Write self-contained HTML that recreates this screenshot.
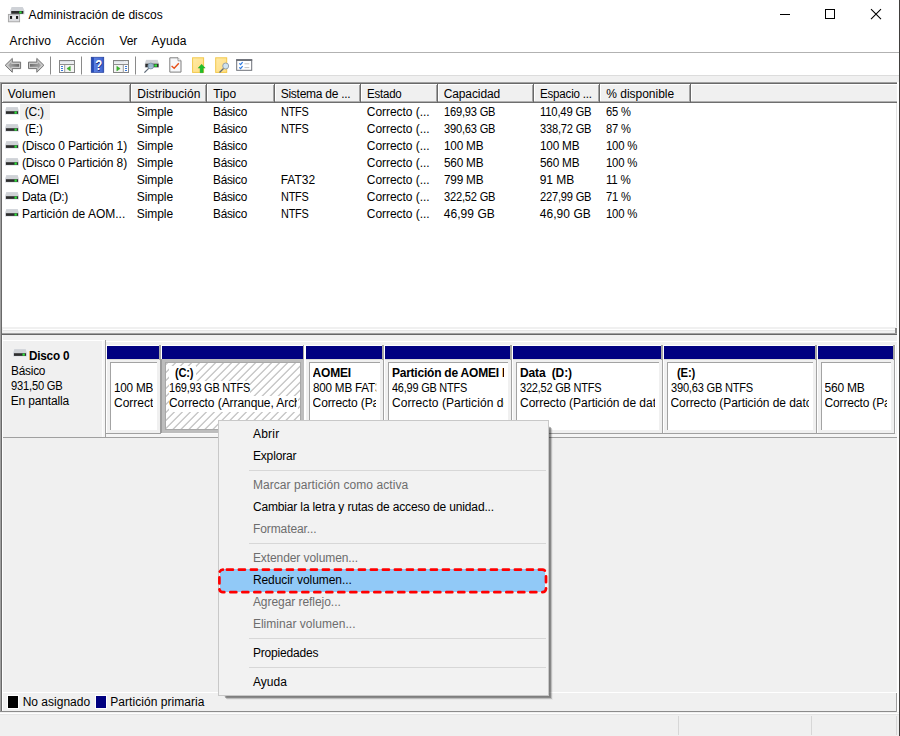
<!DOCTYPE html>
<html lang="es">
<head>
<meta charset="utf-8">
<title>Administración de discos</title>
<style>
*{box-sizing:border-box;margin:0;padding:0}
html,body{width:900px;height:736px;overflow:hidden;background:#fff}
body{position:relative;font-family:"Liberation Sans",sans-serif;font-size:12px;color:#000;line-height:16px}
.a{position:absolute}
.t{position:absolute;white-space:pre;line-height:16px;height:16px;transform-origin:0 0}
.b{font-weight:bold}
.g{color:#6d6d6d}
/* DISK PANE */
.bar{position:absolute;top:346px;height:13px;background:#000080}
/* MENU */
#cmsh{left:223px;top:425px;width:326px;height:271px;box-shadow:1px 1px 0 rgba(0,0,0,.07),2px 2px 0 rgba(0,0,0,.278),3px 3px 0 rgba(0,0,0,.177),4px 4px 0 rgba(0,0,0,.04)}
#cm{left:218px;top:420px;width:331px;height:276px;background:#f2f2f2;border:1px solid #c8c8c8}
.sep{position:absolute;left:249px;width:297px;height:1px;background:#d7d7d7}
</style>
</head>
<body>
<!-- TITLEBAR -->
<svg class="a" style="left:7px;top:6px" width="19" height="17" viewBox="0 0 19 17">
<path d="M4.600 1h11.200l1.900 4v3.500h-14.600v-3.500z" fill="#e1e4e9"/>
<path d="M4.800 1.100h10.800l1.800 3.900h-14.200z" fill="#cfd2d7"/>
<rect x="4.200" y="5" width="12.200" height="2.800" fill="#2b2b2b"/>
<rect x="12.300" y="5.400" width="2.300" height="2" fill="#2ee63c"/>
<rect x="1.400" y="8.400" width="11.200" height="7.400" fill="#dcdde0" stroke="#a3a3a3" stroke-width=".9"/>
<rect x="3" y="10" width="2.100" height="2.900" fill="#1c1c1c"/>
<rect x="9" y="10" width="2.100" height="2.900" fill="#1c1c1c"/>
<rect x="5.500" y="10.500" width="3" height="2" fill="#f4f4f4"/>
</svg>
<svg class="a" style="left:770px;top:0" width="129" height="30" viewBox="0 0 129 30">
<path d="M10 14.5h10" stroke="#000" stroke-width="1" fill="none"/>
<rect x="55.5" y="9.5" width="9" height="9" stroke="#000" stroke-width="1" fill="none"/>
<path d="M101 9.2l10 10M111 9.2l-10 10" stroke="#000" stroke-width="1.1" fill="none"/>
</svg>
<div class="t" style="left:28.6px;top:7px;letter-spacing:0.06px">Administración de discos</div>
<!-- MENUBAR -->
<div class="a" style="left:0;top:52px;width:899px;height:1px;background:#b2b2b2"></div>
<div class="t" style="left:9.6px;top:33px;letter-spacing:0.24px">Archivo</div>
<div class="t" style="left:66.5px;top:33px;letter-spacing:0.36px">Acción</div>
<div class="t" style="left:119.5px;top:33px;letter-spacing:-0.11px">Ver</div>
<div class="t" style="left:151.6px;top:33px;letter-spacing:0.28px">Ayuda</div>
<!-- TOOLBAR -->
<div class="a" style="left:0;top:75px;width:899px;height:8px;background:#f0f0f0;border-top:1px solid #dcdcdc"></div>
<svg class="a" style="left:0;top:53px" width="260" height="22" viewBox="0 0 260 22">
<defs>
<linearGradient id="ga" x1="0" y1="0" x2="0" y2="1"><stop offset="0" stop-color="#c6c6c6"/><stop offset=".45" stop-color="#7d7d7d"/><stop offset=".7" stop-color="#8a8a8a"/><stop offset="1" stop-color="#b8b8b8"/></linearGradient>
<linearGradient id="gh" x1="0" y1="0" x2="1" y2="0"><stop offset="0" stop-color="#2247b0"/><stop offset=".2" stop-color="#2a50bd"/><stop offset=".22" stop-color="#5b7fe0"/><stop offset=".8" stop-color="#4a6ed6"/><stop offset="1" stop-color="#2f54c2"/></linearGradient>
<linearGradient id="gb" x1="0" y1="0" x2="1" y2="0"><stop offset="0" stop-color="#b0b0b0"/><stop offset="1" stop-color="#676767"/></linearGradient>
<linearGradient id="gf" x1="0" y1="0" x2="1" y2="0"><stop offset="0" stop-color="#707070"/><stop offset="1" stop-color="#a8a8a8"/></linearGradient>
<linearGradient id="gy" x1="0" y1="0" x2="1" y2="1"><stop offset="0" stop-color="#ffeaa6"/><stop offset="1" stop-color="#ffdd80"/></linearGradient>
</defs>
<!-- back -->
<path d="M5.200 12.300l7.100-6.900v3.700h8.300v6.500h-8.300v3.700z" fill="#c9c9c9" stroke="#737373" stroke-width="1" stroke-linejoin="round"/>
<path d="M8 12.300l3.300-3.200v1.900h7.800v2.700h-7.800v1.900z" fill="url(#gb)"/>
<!-- forward -->
<path d="M43.900 12.300l-7.100-6.900v3.700h-8.300v6.500h8.300v3.700z" fill="#c9c9c9" stroke="#737373" stroke-width="1" stroke-linejoin="round"/>
<path d="M41.100 12.300l-3.300-3.200v1.900h-7.800v2.700h7.800v1.900z" fill="url(#gf)"/>
<path d="M50.500 3.500v18" stroke="#8a8a8a" stroke-width="1"/>
<!-- console tree -->
<g>
<rect x="59.500" y="7.500" width="15" height="12" fill="#f4f4f4" stroke="#858585"/>
<rect x="60" y="8" width="14" height="1.500" fill="#d9dde3"/>
<rect x="60" y="9.500" width="14" height="1.500" fill="#eceef1"/>
<rect x="70.300" y="8.300" width="1" height="1" fill="#fff"/><rect x="72.200" y="8.300" width="1" height="1" fill="#fff"/>
<path d="M59.500 11.500h15" stroke="#8e8e8e"/>
<rect x="60" y="12" width="4.500" height="7" fill="#fdfdfd"/>
<path d="M64.700 12v7.500" stroke="#9a9a9a"/>
<path d="M61 13.500h2M61 15.500h2M61 17.500h2" stroke="#3a78d8" stroke-width="1"/>
<path d="M70.300 13.200v4.800l-3.400-2.400z" fill="#3cb62e" stroke="#2a9a1e" stroke-width=".4"/>
</g>
<path d="M81.500 3.500v18" stroke="#8a8a8a" stroke-width="1"/>
<!-- help -->
<rect x="91.200" y="4.200" width="12.600" height="15.300" fill="url(#gh)" stroke="#1d3794" stroke-width=".6"/>
<text transform="translate(98.700 17.300) scale(.78 1)" font-family="Liberation Sans,sans-serif" font-size="14.500" font-weight="bold" fill="#1b2f80" text-anchor="middle" x=".8" y=".7">?</text>
<text transform="translate(98.700 17.300) scale(.78 1)" font-family="Liberation Sans,sans-serif" font-size="14.500" font-weight="bold" fill="#fff" text-anchor="middle">?</text>
<!-- action pane -->
<g>
<rect x="113.500" y="7.500" width="15" height="12" fill="#f4f4f4" stroke="#858585"/>
<rect x="114" y="8" width="14" height="1.500" fill="#d9dde3"/>
<rect x="114" y="9.500" width="14" height="1.500" fill="#eceef1"/>
<rect x="124.300" y="8.300" width="1" height="1" fill="#fff"/><rect x="126.200" y="8.300" width="1" height="1" fill="#fff"/>
<path d="M113.500 11.500h15" stroke="#8e8e8e"/>
<rect x="123.500" y="12" width="4.500" height="7" fill="#fdfdfd"/>
<path d="M123.300 12v7.500" stroke="#9a9a9a"/>
<path d="M125 13.500h2M125 15.500h2M125 17.500h2" stroke="#3a78d8" stroke-width="1"/>
<path d="M116.800 13.200v4.800l3.400-2.400z" fill="#3cb62e" stroke="#2a9a1e" stroke-width=".4"/>
</g>
<path d="M135.500 3.500v18" stroke="#8a8a8a" stroke-width="1"/>
<!-- drive w/ magnifier -->
<g>
<path d="M146 6.800h11.600l1.400 4v4.300h-14.300v-4.300z" fill="#dfe2e8"/>
<path d="M146.200 7h11.300l1 3.700h-13.300z" fill="#cdd0d5"/>
<rect x="145.300" y="10.700" width="13.300" height="3.500" fill="#2e2e2e"/>
<rect x="154.300" y="11.400" width="2.700" height="2.300" fill="#2ee63c"/>
<circle cx="150.800" cy="13" r="2.900" fill="#a9c8e0" fill-opacity=".9" stroke="#7890a4" stroke-width=".9"/>
<path d="M148.700 15.400l-4.300 4.200" stroke="#5f6b78" stroke-width="1.300"/>
</g>
<!-- doc w/ check -->
<g>
<path d="M169.800 4.800h8.200l3 3v11.300h-11.200z" fill="#f7f8fa" stroke="#7f7f7f"/>
<path d="M178 4.800v3h3" fill="#fff" stroke="#7f7f7f" stroke-width=".8"/>
<path d="M171.600 12.900l2.600 2.300 4.600-5" fill="none" stroke="#e8501a" stroke-width="1.400"/>
</g>
<!-- folder up -->
<g>
<rect x="192.600" y="4.800" width="11" height="14.600" fill="url(#gy)" stroke="#f2c84b" stroke-width="1"/>
<path d="M201.600 11.200l3.600 3.900h-2v4.600h-3.100v-4.600h-2z" fill="#1fbf2a" stroke="#17a422" stroke-width=".4"/>
</g>
<!-- folder search -->
<g>
<rect x="215.700" y="4.800" width="11" height="14.600" fill="url(#gy)" stroke="#f2c84b" stroke-width="1"/>
<circle cx="225.700" cy="13" r="3" fill="#cfe3f1" stroke="#8d9aa6" stroke-width=".9"/>
<path d="M223.500 15.500l-4 4" stroke="#5f6b78" stroke-width="1.300"/>
</g>
<!-- checklist -->
<g>
<rect x="236.700" y="6.700" width="15" height="10.600" fill="#fff" stroke="#6d7178" stroke-width="1"/>
<rect x="236.200" y="6.200" width="16" height="1.800" fill="#6d7178"/>
<path d="M239.300 10.300l1.300 1.300 2-2.500M239.300 14.300l1.300 1.300 2-2.500" fill="none" stroke="#2f7be0" stroke-width="1.200"/>
<path d="M244.500 10.800h4.800M244.500 14.600h4.800" stroke="#c2c2c2"/>
</g>
</svg>
<!-- LIST -->
<div class="a" style="left:0;top:82px;width:898px;height:1px;background:#a0a0a0"></div>
<div class="a" style="left:1px;top:83px;width:897px;height:1px;background:#696969"></div>
<div class="a" style="left:2px;top:84px;width:895px;height:18px;background:#f0f0f0;border-top:1px solid #fff;border-left:1px solid #fff"></div>
<div class="a" style="left:3px;top:101px;width:894px;height:1px;background:#b0b0b0"></div>
<div class="a" style="left:2px;top:102px;width:895px;height:1px;background:#6e6e6e"></div>
<div class="a" style="left:129px;top:85px;width:1px;height:17px;background:#a3a3a3"></div>
<div class="a" style="left:130px;top:84px;width:1px;height:19px;background:#696969"></div>
<div class="a" style="left:131px;top:84px;width:1px;height:17px;background:#fff"></div>
<div class="a" style="left:205px;top:85px;width:1px;height:17px;background:#a3a3a3"></div>
<div class="a" style="left:206px;top:84px;width:1px;height:19px;background:#696969"></div>
<div class="a" style="left:207px;top:84px;width:1px;height:17px;background:#fff"></div>
<div class="a" style="left:273px;top:85px;width:1px;height:17px;background:#a3a3a3"></div>
<div class="a" style="left:274px;top:84px;width:1px;height:19px;background:#696969"></div>
<div class="a" style="left:275px;top:84px;width:1px;height:17px;background:#fff"></div>
<div class="a" style="left:359px;top:85px;width:1px;height:17px;background:#a3a3a3"></div>
<div class="a" style="left:360px;top:84px;width:1px;height:19px;background:#696969"></div>
<div class="a" style="left:361px;top:84px;width:1px;height:17px;background:#fff"></div>
<div class="a" style="left:436px;top:85px;width:1px;height:17px;background:#a3a3a3"></div>
<div class="a" style="left:437px;top:84px;width:1px;height:19px;background:#696969"></div>
<div class="a" style="left:438px;top:84px;width:1px;height:17px;background:#fff"></div>
<div class="a" style="left:532px;top:85px;width:1px;height:17px;background:#a3a3a3"></div>
<div class="a" style="left:533px;top:84px;width:1px;height:19px;background:#696969"></div>
<div class="a" style="left:534px;top:84px;width:1px;height:17px;background:#fff"></div>
<div class="a" style="left:598px;top:85px;width:1px;height:17px;background:#a3a3a3"></div>
<div class="a" style="left:599px;top:84px;width:1px;height:19px;background:#696969"></div>
<div class="a" style="left:600px;top:84px;width:1px;height:17px;background:#fff"></div>
<div class="a" style="left:689px;top:85px;width:1px;height:17px;background:#a3a3a3"></div>
<div class="a" style="left:690px;top:84px;width:1px;height:19px;background:#696969"></div>
<div class="a" style="left:691px;top:84px;width:1px;height:17px;background:#fff"></div>
<div class="a" style="left:896px;top:103px;width:1px;height:224px;background:#e3e3e3"></div>
<div class="a" style="left:20px;top:103.500px;width:30px;height:16px;background:#f0f0f0"></div>
<svg class="a" style="left:5px;top:107px" width="14" height="8" viewBox="0 0 14 8"><path d="M1.200 0h11.600l1.200 4.200v3.600h-14v-3.600z" fill="#e0e3e9"/><path d="M1.400 .2h11.200l1 4h-13.200z" fill="#cfd2d6"/><rect x=".9" y="4.200" width="12.200" height="2.700" fill="#2d2d2d"/><rect x="9.500" y="4.500" width="2.300" height="2.200" fill="#2ee63c"/></svg>
<svg class="a" style="left:5px;top:124px" width="14" height="8" viewBox="0 0 14 8"><path d="M1.200 0h11.600l1.200 4.200v3.600h-14v-3.600z" fill="#e0e3e9"/><path d="M1.400 .2h11.200l1 4h-13.200z" fill="#cfd2d6"/><rect x=".9" y="4.200" width="12.200" height="2.700" fill="#2d2d2d"/><rect x="9.500" y="4.500" width="2.300" height="2.200" fill="#2ee63c"/></svg>
<svg class="a" style="left:5px;top:141px" width="14" height="8" viewBox="0 0 14 8"><path d="M1.200 0h11.600l1.200 4.200v3.600h-14v-3.600z" fill="#e0e3e9"/><path d="M1.400 .2h11.200l1 4h-13.200z" fill="#cfd2d6"/><rect x=".9" y="4.200" width="12.200" height="2.700" fill="#2d2d2d"/><rect x="9.500" y="4.500" width="2.300" height="2.200" fill="#2ee63c"/></svg>
<svg class="a" style="left:5px;top:158px" width="14" height="8" viewBox="0 0 14 8"><path d="M1.200 0h11.600l1.200 4.200v3.600h-14v-3.600z" fill="#e0e3e9"/><path d="M1.400 .2h11.200l1 4h-13.200z" fill="#cfd2d6"/><rect x=".9" y="4.200" width="12.200" height="2.700" fill="#2d2d2d"/><rect x="9.500" y="4.500" width="2.300" height="2.200" fill="#2ee63c"/></svg>
<svg class="a" style="left:5px;top:175px" width="14" height="8" viewBox="0 0 14 8"><path d="M1.200 0h11.600l1.200 4.200v3.600h-14v-3.600z" fill="#e0e3e9"/><path d="M1.400 .2h11.200l1 4h-13.200z" fill="#cfd2d6"/><rect x=".9" y="4.200" width="12.200" height="2.700" fill="#2d2d2d"/><rect x="9.500" y="4.500" width="2.300" height="2.200" fill="#2ee63c"/></svg>
<svg class="a" style="left:5px;top:192px" width="14" height="8" viewBox="0 0 14 8"><path d="M1.200 0h11.600l1.200 4.200v3.600h-14v-3.600z" fill="#e0e3e9"/><path d="M1.400 .2h11.200l1 4h-13.200z" fill="#cfd2d6"/><rect x=".9" y="4.200" width="12.200" height="2.700" fill="#2d2d2d"/><rect x="9.500" y="4.500" width="2.300" height="2.200" fill="#2ee63c"/></svg>
<svg class="a" style="left:5px;top:209px" width="14" height="8" viewBox="0 0 14 8"><path d="M1.200 0h11.600l1.200 4.200v3.600h-14v-3.600z" fill="#e0e3e9"/><path d="M1.400 .2h11.200l1 4h-13.200z" fill="#cfd2d6"/><rect x=".9" y="4.200" width="12.200" height="2.700" fill="#2d2d2d"/><rect x="9.500" y="4.500" width="2.300" height="2.200" fill="#2ee63c"/></svg>
<div class="t" style="left:7.7px;top:86px;letter-spacing:0.16px">Volumen</div>
<div class="t" style="left:137.3px;top:86px;letter-spacing:0.04px">Distribución</div>
<div class="t" style="left:213.2px;top:86px">Tipo</div>
<div class="t" style="left:280.7px;top:86px;letter-spacing:-0.26px">Sistema de ...</div>
<div class="t" style="left:366.8px;top:86px;letter-spacing:-0.22px;transform:scaleX(0.957)">Estado</div>
<div class="t" style="left:443.7px;top:86px;letter-spacing:-0.11px">Capacidad</div>
<div class="t" style="left:539.7px;top:86px;letter-spacing:-0.22px;transform:scaleX(0.966)">Espacio ...</div>
<div class="t" style="left:606.3px;top:86px;letter-spacing:-0.02px">% disponible</div>
<div class="t" style="left:24.8px;top:104px;letter-spacing:-0.23px">(C:)</div>
<div class="t" style="left:136.8px;top:104px;letter-spacing:-0.08px">Simple</div>
<div class="t" style="left:212.9px;top:104px;letter-spacing:-0.22px;transform:scaleX(0.980)">Básico</div>
<div class="t" style="left:280.7px;top:104px;letter-spacing:-0.22px;transform:scaleX(0.906)">NTFS</div>
<div class="t" style="left:366.8px;top:104px;letter-spacing:-0.04px">Correcto (...</div>
<div class="t" style="left:443.7px;top:104px;letter-spacing:-0.22px;transform:scaleX(0.926)">169,93 GB</div>
<div class="t" style="left:539.7px;top:104px;letter-spacing:-0.22px;transform:scaleX(0.941)">110,49 GB</div>
<div class="t" style="left:606.3px;top:104px;letter-spacing:-0.22px;transform:scaleX(0.929)">65 %</div>
<div class="t" style="left:24.8px;top:121px;letter-spacing:-0.22px;transform:scaleX(0.948)">(E:)</div>
<div class="t" style="left:136.8px;top:121px;letter-spacing:-0.08px">Simple</div>
<div class="t" style="left:212.9px;top:121px;letter-spacing:-0.22px;transform:scaleX(0.980)">Básico</div>
<div class="t" style="left:280.7px;top:121px;letter-spacing:-0.22px;transform:scaleX(0.906)">NTFS</div>
<div class="t" style="left:366.8px;top:121px;letter-spacing:-0.04px">Correcto (...</div>
<div class="t" style="left:443.7px;top:121px;letter-spacing:-0.22px;transform:scaleX(0.926)">390,63 GB</div>
<div class="t" style="left:539.7px;top:121px;letter-spacing:-0.22px;transform:scaleX(0.926)">338,72 GB</div>
<div class="t" style="left:606.3px;top:121px;letter-spacing:-0.22px;transform:scaleX(0.929)">87 %</div>
<div class="t" style="left:21.9px;top:138px;letter-spacing:-0.14px">(Disco 0 Partición 1)</div>
<div class="t" style="left:136.8px;top:138px;letter-spacing:-0.08px">Simple</div>
<div class="t" style="left:212.9px;top:138px;letter-spacing:-0.22px;transform:scaleX(0.980)">Básico</div>
<div class="t" style="left:366.8px;top:138px;letter-spacing:-0.04px">Correcto (...</div>
<div class="t" style="left:443.7px;top:138px;letter-spacing:-0.22px;transform:scaleX(0.982)">100 MB</div>
<div class="t" style="left:539.7px;top:138px;letter-spacing:-0.22px;transform:scaleX(0.982)">100 MB</div>
<div class="t" style="left:606.3px;top:138px;letter-spacing:-0.22px;transform:scaleX(0.947)">100 %</div>
<div class="t" style="left:21.9px;top:155px;letter-spacing:-0.14px">(Disco 0 Partición 8)</div>
<div class="t" style="left:136.8px;top:155px;letter-spacing:-0.08px">Simple</div>
<div class="t" style="left:212.9px;top:155px;letter-spacing:-0.22px;transform:scaleX(0.980)">Básico</div>
<div class="t" style="left:366.8px;top:155px;letter-spacing:-0.04px">Correcto (...</div>
<div class="t" style="left:443.7px;top:155px;letter-spacing:-0.22px;transform:scaleX(0.982)">560 MB</div>
<div class="t" style="left:539.7px;top:155px;letter-spacing:-0.22px;transform:scaleX(0.982)">560 MB</div>
<div class="t" style="left:606.3px;top:155px;letter-spacing:-0.22px;transform:scaleX(0.947)">100 %</div>
<div class="t" style="left:21.9px;top:172px;letter-spacing:-0.29px">AOMEI</div>
<div class="t" style="left:136.8px;top:172px;letter-spacing:-0.08px">Simple</div>
<div class="t" style="left:212.9px;top:172px;letter-spacing:-0.22px;transform:scaleX(0.980)">Básico</div>
<div class="t" style="left:280.7px;top:172px">FAT32</div>
<div class="t" style="left:366.8px;top:172px;letter-spacing:-0.04px">Correcto (...</div>
<div class="t" style="left:443.7px;top:172px;letter-spacing:-0.22px;transform:scaleX(0.982)">799 MB</div>
<div class="t" style="left:539.7px;top:172px">91 MB</div>
<div class="t" style="left:606.3px;top:172px;letter-spacing:-0.22px;transform:scaleX(0.961)">11 %</div>
<div class="t" style="left:21.9px;top:189px;letter-spacing:-0.28px">Data (D:)</div>
<div class="t" style="left:136.8px;top:189px;letter-spacing:-0.08px">Simple</div>
<div class="t" style="left:212.9px;top:189px;letter-spacing:-0.22px;transform:scaleX(0.980)">Básico</div>
<div class="t" style="left:280.7px;top:189px;letter-spacing:-0.22px;transform:scaleX(0.906)">NTFS</div>
<div class="t" style="left:366.8px;top:189px;letter-spacing:-0.04px">Correcto (...</div>
<div class="t" style="left:443.7px;top:189px;letter-spacing:-0.22px;transform:scaleX(0.926)">322,52 GB</div>
<div class="t" style="left:539.7px;top:189px;letter-spacing:-0.22px;transform:scaleX(0.926)">227,99 GB</div>
<div class="t" style="left:606.3px;top:189px;letter-spacing:-0.22px;transform:scaleX(0.929)">71 %</div>
<div class="t" style="left:21.9px;top:206px">Partición de AOM...</div>
<div class="t" style="left:136.8px;top:206px;letter-spacing:-0.08px">Simple</div>
<div class="t" style="left:212.9px;top:206px;letter-spacing:-0.22px;transform:scaleX(0.980)">Básico</div>
<div class="t" style="left:280.7px;top:206px;letter-spacing:-0.22px;transform:scaleX(0.906)">NTFS</div>
<div class="t" style="left:366.8px;top:206px;letter-spacing:-0.04px">Correcto (...</div>
<div class="t" style="left:443.7px;top:206px;letter-spacing:0.07px">46,99 GB</div>
<div class="t" style="left:539.7px;top:206px;letter-spacing:0.07px">46,90 GB</div>
<div class="t" style="left:606.3px;top:206px;letter-spacing:-0.22px;transform:scaleX(0.947)">100 %</div>
<!-- PANE -->
<div class="a" style="left:2px;top:327px;width:895px;height:385px;background:#f0f0f0"></div>
<div class="a" style="left:3px;top:329px;width:894px;height:1px;background:#fff"></div>
<div class="a" style="left:3px;top:330px;width:894px;height:1px;background:#e6e6e6"></div>
<div class="a" style="left:2px;top:333px;width:895px;height:1px;background:#a0a0a0"></div>
<div class="a" style="left:2px;top:334px;width:895px;height:1px;background:#666"></div>
<div class="a" style="left:895px;top:328px;width:1.5px;height:5px;background:#8a8a8a"></div>
<div class="a" style="left:0;top:82px;width:1px;height:630px;background:#a0a0a0"></div>
<div class="a" style="left:1px;top:83px;width:1px;height:629px;background:#696969"></div>
<div class="a" style="left:2px;top:335px;width:1px;height:377px;background:#fff"></div>
<div class="a" style="left:3px;top:340px;width:102px;height:1px;background:#fff"></div>
<div class="a" style="left:106px;top:341px;width:791px;height:1px;background:#fff"></div>
<div class="a" style="left:102px;top:341px;width:1px;height:96px;background:#fcfcfc"></div>
<div class="a" style="left:103px;top:341px;width:2px;height:96px;background:#f5f5f5"></div>
<div class="a" style="left:105px;top:340px;width:1px;height:98px;background:#a0a0a0"></div>
<div class="a" style="left:106px;top:345px;width:1px;height:88px;background:#fff"></div>
<div class="a" style="left:3px;top:437px;width:894px;height:1px;background:#a0a0a0"></div>
<div class="a" style="left:106px;top:434px;width:791px;height:3px;background:#f5f5f5"></div>
<div class="a" style="left:106px;top:433px;width:789px;height:1px;background:#a0a0a0"></div>
<div class="a" style="left:106px;top:345px;width:788px;height:1px;background:#fff"></div>
<svg class="a" style="left:13px;top:349px" width="14" height="8" viewBox="0 0 14 8"><path d="M1.200 0h11.600l1.200 4.200v3.600h-14v-3.600z" fill="#e0e3e9"/><path d="M1.400 .2h11.200l1 4h-13.200z" fill="#cfd2d6"/><rect x=".9" y="4.200" width="12.200" height="2.700" fill="#2d2d2d"/><rect x="9.500" y="4.500" width="2.300" height="2.200" fill="#2ee63c"/></svg>
<div class="bar" style="left:107px;width:52px"></div>
<div class="a" style="left:159px;top:345px;width:2px;height:15px;background:#a9a9a4"></div>
<div class="a" style="left:160px;top:360px;width:1px;height:74px;background:#a3a3a3"></div>
<div class="a" style="left:161px;top:345px;width:1px;height:88px;background:#fff"></div>
<div class="a" style="left:107px;top:359px;width:52px;height:1px;background:#dcdcd6"></div>
<div class="a" style="left:110px;top:362px;width:47px;height:68px;background:#fff;border-left:1px solid #a3a3a3;border-top:1px solid #a3a3a3"></div>
<div class="bar" style="left:162px;width:141px"></div>
<div class="a" style="left:303px;top:345px;width:2px;height:15px;background:#a9a9a4"></div>
<div class="a" style="left:304px;top:345px;width:2px;height:89px;background:#fff"></div>
<div class="a" style="left:162px;top:359px;width:141px;height:1px;background:#dcdcd6"></div>
<div class="a" style="left:160px;top:359px;width:144px;height:74px;background:#bdbdbd;border-left:2px solid #9c9c9c"></div>
<div class="a" style="left:161px;top:433px;width:145px;height:1px;background:#fafafa"></div>
<svg class="a" style="left:165px;top:362px" width="136" height="68"><defs><pattern id="hp" x="2.800" y=".500" width="8" height="8" patternUnits="userSpaceOnUse"><path d="M-1 9l10-10M-1 1l2-2M7 9l2-2" stroke="#6e6e6e" stroke-width=".75"/></pattern></defs><rect width="100%" height="100%" fill="#a8a8a8"/><rect x="1" y="1" width="134" height="66" fill="#fff"/><rect x="1" y="1" width="134" height="66" fill="url(#hp)"/></svg>
<div class="a" style="left:169.3px;top:366px;width:27.2px;height:15px;background:#fff"></div>
<div class="a" style="left:169.3px;top:381px;width:81px;height:15px;background:#fff"></div>
<div class="a" style="left:169.3px;top:396px;width:128.5px;height:16px;background:#fff"></div>
<div class="bar" style="left:306px;width:76px"></div>
<div class="a" style="left:382px;top:345px;width:2px;height:15px;background:#a9a9a4"></div>
<div class="a" style="left:383px;top:360px;width:1px;height:74px;background:#a3a3a3"></div>
<div class="a" style="left:384px;top:345px;width:1px;height:88px;background:#fff"></div>
<div class="a" style="left:306px;top:359px;width:76px;height:1px;background:#dcdcd6"></div>
<div class="a" style="left:309px;top:362px;width:71px;height:68px;background:#fff;border-left:1px solid #a3a3a3;border-top:1px solid #a3a3a3"></div>
<div class="bar" style="left:385px;width:125px"></div>
<div class="a" style="left:510px;top:345px;width:2px;height:15px;background:#a9a9a4"></div>
<div class="a" style="left:511px;top:360px;width:1px;height:74px;background:#a3a3a3"></div>
<div class="a" style="left:512px;top:345px;width:1px;height:88px;background:#fff"></div>
<div class="a" style="left:385px;top:359px;width:125px;height:1px;background:#dcdcd6"></div>
<div class="a" style="left:388px;top:362px;width:120px;height:68px;background:#fff;border-left:1px solid #a3a3a3;border-top:1px solid #a3a3a3"></div>
<div class="bar" style="left:513px;width:148px"></div>
<div class="a" style="left:661px;top:345px;width:2px;height:15px;background:#a9a9a4"></div>
<div class="a" style="left:662px;top:360px;width:1px;height:74px;background:#a3a3a3"></div>
<div class="a" style="left:663px;top:345px;width:1px;height:88px;background:#fff"></div>
<div class="a" style="left:513px;top:359px;width:148px;height:1px;background:#dcdcd6"></div>
<div class="a" style="left:516px;top:362px;width:143px;height:68px;background:#fff;border-left:1px solid #a3a3a3;border-top:1px solid #a3a3a3"></div>
<div class="bar" style="left:664px;width:151px"></div>
<div class="a" style="left:815px;top:345px;width:2px;height:15px;background:#a9a9a4"></div>
<div class="a" style="left:816px;top:360px;width:1px;height:74px;background:#a3a3a3"></div>
<div class="a" style="left:817px;top:345px;width:1px;height:88px;background:#fff"></div>
<div class="a" style="left:664px;top:359px;width:151px;height:1px;background:#dcdcd6"></div>
<div class="a" style="left:667px;top:362px;width:146px;height:68px;background:#fff;border-left:1px solid #a3a3a3;border-top:1px solid #a3a3a3"></div>
<div class="bar" style="left:818px;width:75px"></div>
<div class="a" style="left:893px;top:345px;width:2px;height:15px;background:#a9a9a4"></div>
<div class="a" style="left:894px;top:360px;width:1px;height:74px;background:#a3a3a3"></div>
<div class="a" style="left:895px;top:345px;width:1px;height:88px;background:#fff"></div>
<div class="a" style="left:818px;top:359px;width:75px;height:1px;background:#dcdcd6"></div>
<div class="a" style="left:821px;top:362px;width:70px;height:68px;background:#fff;border-left:1px solid #a3a3a3;border-top:1px solid #a3a3a3"></div>
<div class="a" style="left:3px;top:692px;width:894px;height:1px;background:#fff"></div>
<div class="a" style="left:0;top:711px;width:897px;height:1px;background:#8c8c8c"></div>
<div class="a" style="left:896px;top:693px;width:1px;height:19px;background:#a0a0a0"></div>
<div class="a" style="left:7px;top:695px;width:12px;height:14px;background:#000;border:1px solid #fff"></div>
<div class="a" style="left:95px;top:695px;width:12px;height:14px;background:#000080;border:1px solid #fff"></div>
<div class="t b" style="left:28.9px;top:348px;letter-spacing:-0.22px;transform:scaleX(0.977)">Disco 0</div>
<div class="t" style="left:10.7px;top:363px;letter-spacing:-0.22px;transform:scaleX(0.985)">Básico</div>
<div class="t" style="left:10.7px;top:378px;letter-spacing:-0.22px;transform:scaleX(0.931)">931,50 GB</div>
<div class="t" style="left:10.7px;top:393px;letter-spacing:-0.15px">En pantalla</div>
<div class="t" style="left:114.0px;top:380px;letter-spacing:-0.22px;width:39.9px;overflow:hidden;transform:scaleX(0.977)">100 MB</div>
<div class="t" style="left:114.0px;top:395px;letter-spacing:-0.02px;width:39.0px;overflow:hidden">Correcto</div>
<div class="t b" style="left:175.1px;top:365px;letter-spacing:-0.22px;width:131.7px;overflow:hidden;transform:scaleX(0.925)">(C:)</div>
<div class="t" style="left:169.0px;top:380px;letter-spacing:-0.22px;width:140.4px;overflow:hidden;transform:scaleX(0.912)">169,93 GB NTFS</div>
<div class="t" style="left:169.0px;top:395px;letter-spacing:-0.07px;width:128.0px;overflow:hidden">Correcto (Arranque, Arch</div>
<div class="t b" style="left:312.6px;top:365px;letter-spacing:-0.23px;width:63.4px;overflow:hidden">AOMEI</div>
<div class="t" style="left:312.6px;top:380px;letter-spacing:-0.22px;width:65.2px;overflow:hidden;transform:scaleX(0.973)">800 MB FAT3</div>
<div class="t" style="left:312.6px;top:395px;letter-spacing:-0.13px;width:63.4px;overflow:hidden">Correcto (Pa</div>
<div class="t b" style="left:391.9px;top:365px;letter-spacing:-0.22px;width:112.1px;overflow:hidden">Partición de AOMEI R</div>
<div class="t" style="left:391.9px;top:380px;letter-spacing:-0.22px;width:123.3px;overflow:hidden;transform:scaleX(0.909)">46,99 GB NTFS</div>
<div class="t" style="left:391.9px;top:395px;letter-spacing:0.08px;width:112.1px;overflow:hidden">Correcto (Partición de</div>
<div class="t b" style="left:520.0px;top:365px;letter-spacing:-0.15px;width:135.0px;overflow:hidden">Data  (D:)</div>
<div class="t" style="left:520.0px;top:380px;letter-spacing:-0.22px;width:147.4px;overflow:hidden;transform:scaleX(0.916)">322,52 GB NTFS</div>
<div class="t" style="left:520.0px;top:395px;letter-spacing:-0.03px;width:135.0px;overflow:hidden">Correcto (Partición de dato</div>
<div class="t b" style="left:676.6px;top:365px;letter-spacing:-0.22px;width:140.6px;overflow:hidden;transform:scaleX(0.941)">(E:)</div>
<div class="t" style="left:670.5px;top:380px;letter-spacing:-0.22px;width:150.3px;overflow:hidden;transform:scaleX(0.922)">390,63 GB NTFS</div>
<div class="t" style="left:670.5px;top:395px;letter-spacing:-0.06px;width:138.5px;overflow:hidden">Correcto (Partición de dato</div>
<div class="t" style="left:824.6px;top:380px;letter-spacing:-0.24px;width:62.4px;overflow:hidden">560 MB</div>
<div class="t" style="left:824.6px;top:395px;letter-spacing:-0.18px;width:62.4px;overflow:hidden">Correcto (Pa</div>
<!-- CTX -->
<div class="a" id="cmsh"></div>
<div class="a" id="cm"></div>
<div class="sep" style="top:470px"></div>
<div class="sep" style="top:543px"></div>
<div class="sep" style="top:638px"></div>
<div class="sep" style="top:667px"></div>
<div class="a" style="left:220px;top:569px;width:325px;height:22.500px;background:#91c9f7"></div>
<svg class="a" style="left:217px;top:566px" width="333" height="29"><rect x="2.400" y="3.700" width="326.600" height="22.500" rx="3.500" fill="none" stroke="#ff0000" stroke-width="2.700" stroke-dasharray="6 6" stroke-dashoffset="-4" stroke-linecap="round"/></svg>
<div class="t" style="left:252.9px;top:426px;letter-spacing:0.27px">Abrir</div>
<div class="t" style="left:252.9px;top:448px;letter-spacing:-0.14px">Explorar</div>
<div class="t g" style="left:252.9px;top:477px;letter-spacing:0.07px">Marcar partición como activa</div>
<div class="t" style="left:252.9px;top:499px;letter-spacing:-0.15px">Cambiar la letra y rutas de acceso de unidad...</div>
<div class="t g" style="left:252.9px;top:521px;letter-spacing:-0.08px">Formatear...</div>
<div class="t g" style="left:252.9px;top:550px;letter-spacing:-0.08px">Extender volumen...</div>
<div class="t" style="left:252.9px;top:572px;letter-spacing:-0.07px">Reducir volumen...</div>
<div class="t g" style="left:252.9px;top:594px;letter-spacing:-0.05px">Agregar reflejo...</div>
<div class="t g" style="left:252.9px;top:616px;letter-spacing:0.03px">Eliminar volumen...</div>
<div class="t" style="left:252.9px;top:645px;letter-spacing:-0.18px">Propiedades</div>
<div class="t" style="left:252.9px;top:674px;letter-spacing:0.08px">Ayuda</div>
<!-- STATUS -->
<div class="a" style="left:0;top:712px;width:899px;height:24px;background:#f0f0f0"></div>
<div class="a" style="left:0;top:713px;width:899px;height:1px;background:#fff"></div>
<div class="a" style="left:0;top:714px;width:899px;height:1px;background:#e4e4e4"></div>
<div class="a" style="left:678px;top:716px;width:1px;height:19px;background:#d7d7d7"></div>
<div class="a" style="left:811px;top:716px;width:1px;height:19px;background:#d7d7d7"></div>
<div class="a" style="left:896px;top:716px;width:1px;height:19px;background:#d7d7d7"></div>
<div class="a" style="left:899px;top:0;width:1px;height:736px;background:#403e3c"></div>
<div class="a" style="left:897px;top:82px;width:2px;height:630px;background:#fff"></div>
<div class="t" style="left:22.7px;top:694px">No asignado</div>
<div class="t" style="left:110.3px;top:694px;letter-spacing:0.05px">Partición primaria</div>
</body>
</html>
